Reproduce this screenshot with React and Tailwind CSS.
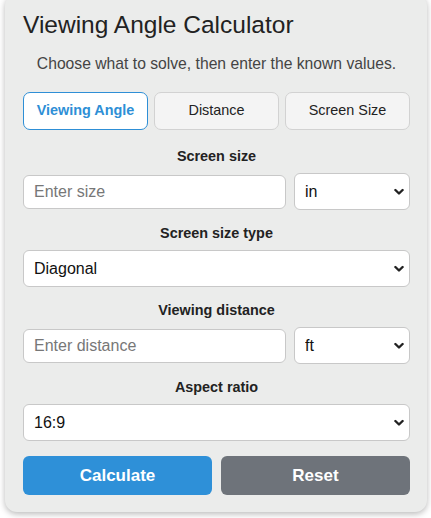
import React, { useState } from "react";

const FONT = { fontFamily: '"Liberation Sans", Arial, sans-serif' };

const MODES = ["Viewing Angle", "Distance", "Screen Size"];

const Chevron = () => (
  <svg
    className="pointer-events-none absolute right-[6px] top-1/2 -translate-y-1/2"
    width="10"
    height="7"
    viewBox="0 0 10 7"
    fill="none"
  >
    <path d="M1.4 1.5 L5 5 L8.6 1.5" stroke="#222" strokeWidth="2.4" strokeLinecap="round" strokeLinejoin="round" />
  </svg>
);

const Select = ({ value, options, className = "" }) => (
  <div className={`relative ${className}`}>
    <select
      defaultValue={value}
      className="h-[37px] w-full appearance-none rounded-[6px] border border-[#c8c8c8] bg-white pl-[10px] pr-[24px] text-[16px] text-[#111] outline-none"
    >
      {options.map((o) => (
        <option key={o}>{o}</option>
      ))}
    </select>
    <Chevron />
  </div>
);

const Label = ({ children, first }) => (
  <div
    className={`${first ? "mt-[15px]" : "mt-[12px]"} mb-[6px] text-center text-[14.4px] font-bold leading-[22px] text-[#222]`}
  >
    {children}
  </div>
);

export default function App() {
  const [mode, setMode] = useState("Viewing Angle");

  return (
    <div className="flex flex-col bg-white pb-[10px]" style={FONT}>
      <div className="mx-[5px] -mt-[6px] w-[422px] rounded-[12px] bg-[#ebeceb] pb-[17px] pl-[18px] pr-[17px] pt-[16px] shadow-[0_2px_6px_rgba(0,0,0,0.28)]">
        <h1 className="text-[24.5px] leading-[29px] text-[#222]">Viewing Angle Calculator</h1>
        <p className="mt-[13px] text-center text-[15.7px] leading-[24px] text-[#444]">
          Choose what to solve, then enter the known values.
        </p>

        {/* mode tabs */}
        <div className="mt-[16px] grid grid-cols-3 gap-[6px]">
          {MODES.map((m) =>
            m === mode ? (
              <button
                key={m}
                onClick={() => setMode(m)}
                className="h-[38px] rounded-[7px] border border-[#2e8fd6] bg-white text-[14.4px] font-bold text-[#2e8fd6]"
              >
                {m}
              </button>
            ) : (
              <button
                key={m}
                onClick={() => setMode(m)}
                className="h-[38px] rounded-[7px] border border-[#d2d2d2] bg-[#f4f4f4] text-[14.4px] text-[#222]"
              >
                {m}
              </button>
            )
          )}
        </div>

        <Label first>Screen size</Label>
        <div className="flex items-center gap-[8px]">
          <input
            placeholder="Enter size"
            className="h-[34px] min-w-0 flex-1 rounded-[6px] border border-[#c8c8c8] bg-white px-[10px] text-[16px] text-[#111] outline-none placeholder:text-[#777]"
          />
          <Select value="in" options={["in", "cm"]} className="w-[116px]" />
        </div>

        <Label>Screen size type</Label>
        <Select value="Diagonal" options={["Diagonal", "Width", "Height"]} />

        <Label>Viewing distance</Label>
        <div className="flex items-center gap-[8px]">
          <input
            placeholder="Enter distance"
            className="h-[34px] min-w-0 flex-1 rounded-[6px] border border-[#c8c8c8] bg-white px-[10px] text-[16px] text-[#111] outline-none placeholder:text-[#777]"
          />
          <Select value="ft" options={["ft", "m", "in", "cm"]} className="w-[116px]" />
        </div>

        <Label>Aspect ratio</Label>
        <Select value="16:9" options={["16:9", "21:9", "4:3"]} />

        <div className="mt-[15px] grid grid-cols-2 gap-[9px]">
          <button className="h-[39px] rounded-[6px] bg-[#2e90d8] text-[17px] font-bold text-white">Calculate</button>
          <button className="h-[39px] rounded-[6px] bg-[#6e737a] text-[17px] font-bold text-white">Reset</button>
        </div>
      </div>
    </div>
  );
}
